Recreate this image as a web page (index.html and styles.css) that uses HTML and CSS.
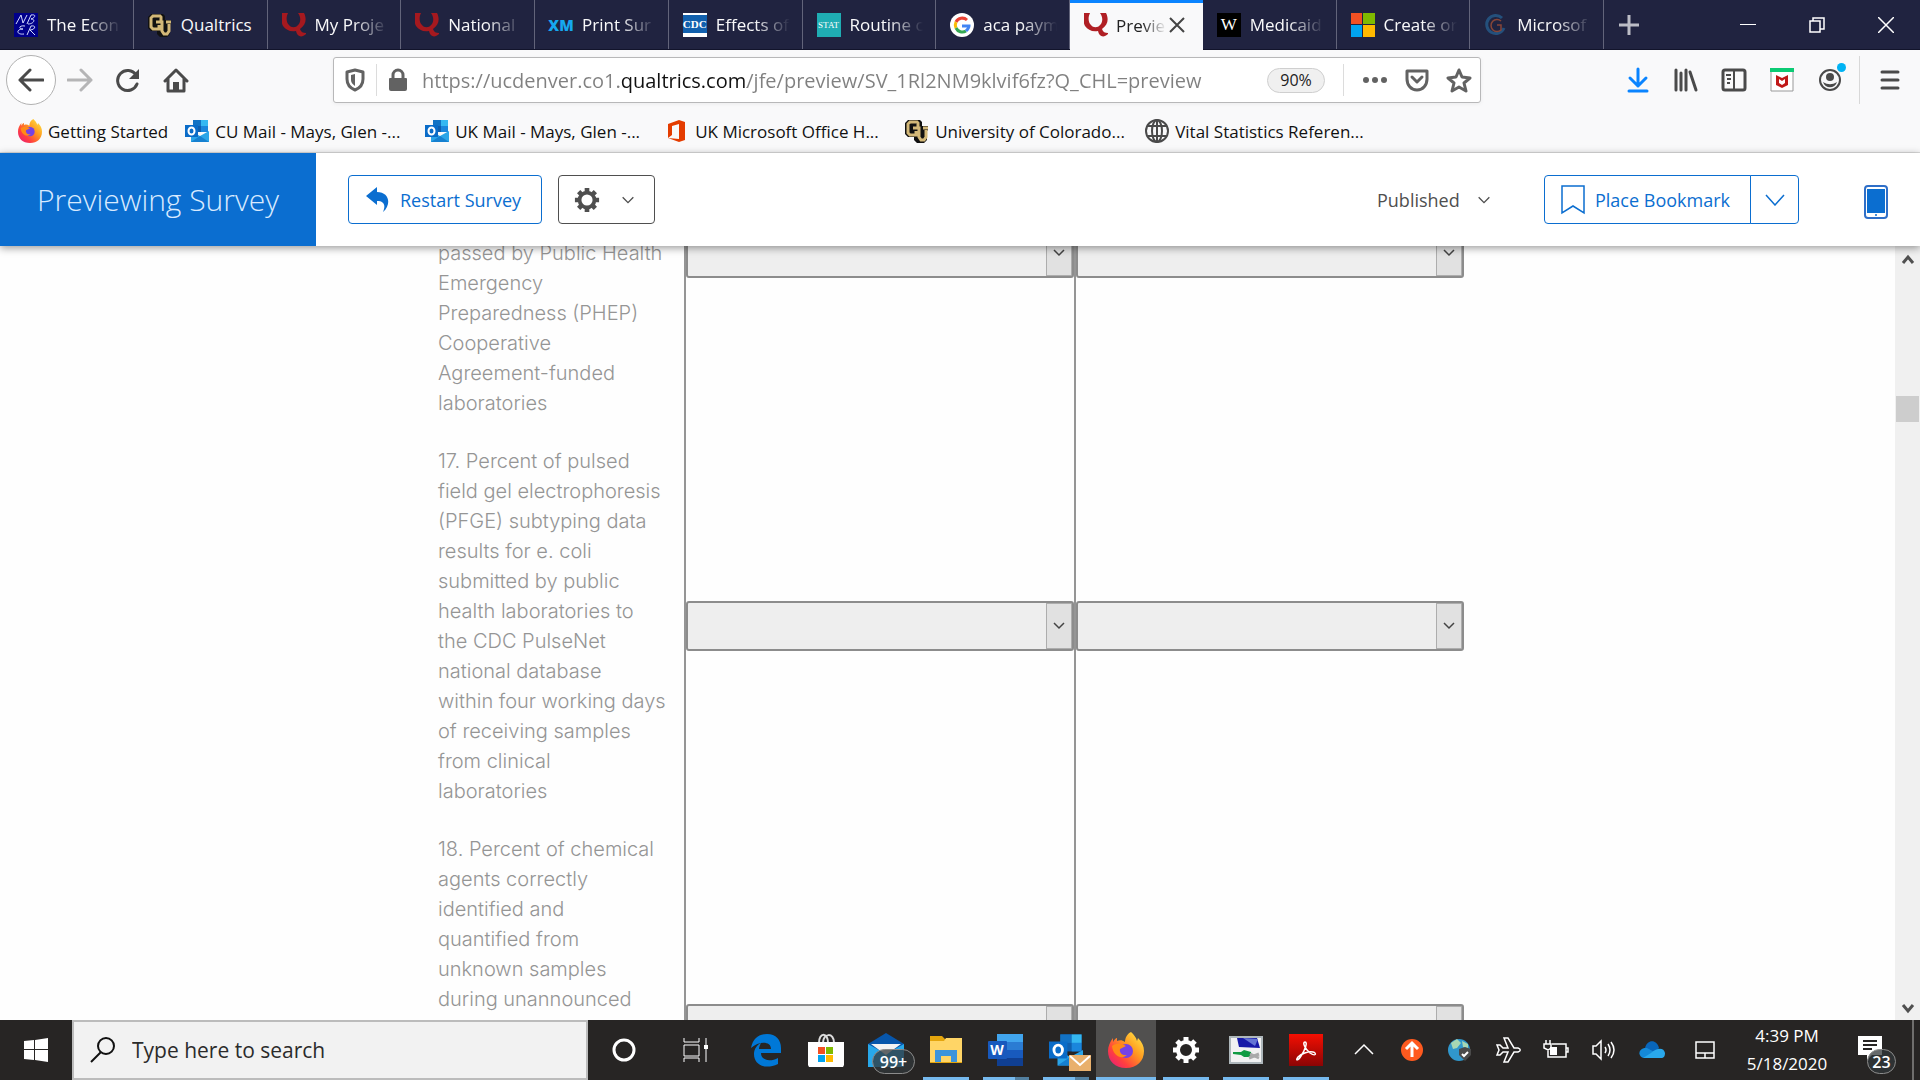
FILE: index.html
```html
<!DOCTYPE html>
<html lang="en">
<head>
    <meta charset="UTF-8">
    <meta name="viewport" content="width=device-width, initial-scale=1.0">
    <title>Preview - Online Survey Software</title>
    <link rel="stylesheet" href="styles.css">
</head>
<body>
    <!-- shared icons -->
    <svg class="defs" aria-hidden="true">
        <symbol id="q-logo" viewBox="0 0 24 24">
            <path d="M0 0h6c-2 4-2 9 1 12 2 3 7 3 9 0 3-3 3-8 0-12h6c3 6 2 12-4 16 1 3 3 4 6 4v1c-4 4-9 3-10-3-6 1-10-1-13-5C-1 9-1 4 0 0z"/>
        </symbol>
        <symbol id="cu-logo" viewBox="0 0 24 24">
            <path d="M3 1h12l2 2v4h6v4l-1 1v9l-3 3h-7l-3-3v-3H3l-3-3V4z" fill="#111"/>
            <path d="M13 8V4l-1-1H5L3 5v9l2 2h6v-4M8 9h6v9l2 3h3l2-3v-7M18 9h5" fill="none" stroke="#d3b878" stroke-width="3"/>
        </symbol>
        <symbol id="outlook" viewBox="0 0 24 24">
            <path d="M8 1h15v12H8z" fill="#0f5fae"/>
            <path d="M8 1h8v6H8z" fill="#1272c4"/>
            <path d="M16 1h7v6h-7z" fill="#35b8f1"/>
            <path d="M16 7h7v6h-7z" fill="#1a86dc"/>
            <path d="M6 12l9 5 9-5v11H6z" fill="#2ba5e8"/>
            <path d="M15 17l9 6H6z" fill="#1680d0"/>
            <path d="M0 6h13v12H0z" fill="#0a6cc8"/>
            <ellipse cx="6.500" cy="12" rx="3" ry="3.500" fill="none" stroke="#fff" stroke-width="2"/>
        </symbol>
        <symbol id="firefox" viewBox="0 0 36 36">
            <linearGradient id="ff" x1="1" y1="0" x2="0" y2="1">
                <stop offset="0" stop-color="#fff44f"/><stop offset=".4" stop-color="#ff9a1f"/>
                <stop offset=".7" stop-color="#ff3f3f"/><stop offset="1" stop-color="#e31587"/>
            </linearGradient>
            <path d="M23 0c3 3 5 5 6 9l1-3c4 4 6 8 6 13 0 10-7 17-18 17S0 29 0 19c0-5 2-9 5-13v4c1-2 3-4 4-4v3c3-1 5-1 8 1 0-4 2-8 6-10z" fill="url(#ff)"/>
            <circle cx="18" cy="19" r="7" fill="#7542e5"/>
            <path d="M4 14c4-3 9-3 14 0l-6 3c-1 4 3 7 7 6-5 5-14 1-15-9z" fill="#ff8a16"/>
        </symbol>
        <symbol id="chevron" viewBox="0 0 24 24">
            <path d="M4 8l8 8 8-8" fill="none" stroke="currentColor" stroke-width="2"/>
        </symbol>
        <symbol id="gear" viewBox="0 0 28 28">
            <circle cx="14" cy="14" r="8" fill="none" stroke="currentColor" stroke-width="4"/>
            <path d="M14 1v5M14 22v5M1 14h5M22 14h5M5 5l4 4M19 19l4 4M5 23l4-4M19 9l4-4" stroke="currentColor" stroke-width="5"/>
        </symbol>
    </svg>

    <nav class="tabs">
        <div class="tab"><button class="tab-main">
            <svg class="fav" viewBox="0 0 24 24"><path d="M0 0h24v24H0z" fill="#00008b"/><g fill="none" stroke="#d5dcff"><path d="M2 11L7 2l2 8 4-8M13 11l4-9c6-1 4 3 0 4 5 0 3 5-3 5"/><path d="M11 13c-6-1-7 3-2 3-7 0-7 6 1 5M13 22l4-9c6-1 4 4-1 4l5 5"/></g></svg>
            <span class="tab-text">The Econ</span></button></div>
        <div class="tab"><button class="tab-main">
            <svg class="fav"><use href="#cu-logo"/></svg>
            <span class="tab-text">Qualtrics</span></button></div>
        <div class="tab"><button class="tab-main">
            <svg class="fav q-dark"><use href="#q-logo"/></svg>
            <span class="tab-text">My Proje</span></button></div>
        <div class="tab"><button class="tab-main">
            <svg class="fav q-dark"><use href="#q-logo"/></svg>
            <span class="tab-text">National</span></button></div>
        <div class="tab"><button class="tab-main">
            <span class="fav fav-xm">XM</span>
            <span class="tab-text">Print Sur</span></button></div>
        <div class="tab"><button class="tab-main">
            <span class="fav fav-cdc">CDC</span>
            <span class="tab-text">Effects of</span></button></div>
        <div class="tab"><button class="tab-main">
            <span class="fav fav-stat">STAT</span>
            <span class="tab-text">Routine c</span></button></div>
        <div class="tab"><button class="tab-main">
            <svg class="fav" viewBox="0 0 24 24"><circle cx="12" cy="12" r="12" fill="#fff"/><g fill="none" stroke-width="3"><path d="M17 7a7 7 0 0 0-11 2" stroke="#ea4335"/><path d="M6 9a7 7 0 0 0 0 6" stroke="#fbbc05"/><path d="M6 15a7 7 0 0 0 10 3" stroke="#34a853"/><path d="M16 18c2-2 3-3 3-5h-7" stroke="#4285f4"/></g></svg>
            <span class="tab-text">aca paym</span></button></div>
        <div class="tab active"><button class="tab-main">
            <svg class="fav q-light"><use href="#q-logo"/></svg>
            <span class="tab-text">Previe</span></button>
            <button class="tab-close" aria-label="Close tab"><svg width="16" height="16" viewBox="0 0 16 16"><path d="M1 1l14 14M15 1L1 15" stroke="#444" stroke-width="2"/></svg></button></div>
        <div class="tab"><button class="tab-main">
            <span class="fav fav-w">W</span>
            <span class="tab-text">Medicaid</span></button></div>
        <div class="tab"><button class="tab-main">
            <svg class="fav" viewBox="0 0 24 24"><path d="M0 0h11v11H0z" fill="#f25022"/><path d="M12 0h12v11H12z" fill="#7fba00"/><path d="M0 12h11v12H0z" fill="#00a4ef"/><path d="M12 12h12v12H12z" fill="#ffb900"/></svg>
            <span class="tab-text">Create or</span></button></div>
        <div class="tab"><button class="tab-main">
            <svg class="fav" viewBox="0 0 24 24"><g fill="none"><path d="M18 5a9 9 0 1 0 2 10" stroke="#24507c" stroke-width="3"/><path d="M17 8a6 6 0 1 0 0 9v-5h-4" stroke="#874638" stroke-width="1.500"/></g></svg>
            <span class="tab-text">Microsof</span></button></div>
        <div class="window-controls">
            <button class="new-tab" aria-label="New tab"><svg width="22" height="22" viewBox="0 0 22 22"><path d="M11 1v20M1 11h20" stroke="#bcbdc6" stroke-width="3"/></svg></button>
            <button class="win-btn" aria-label="Minimize"><svg width="16" height="16" viewBox="0 0 16 16"><path d="M0 7h16v1H0z" fill="#fff"/></svg></button>
            <button class="win-btn" aria-label="Restore"><svg width="16" height="16" viewBox="0 0 16 16"><path d="M1 4h10v11H1zM4 4V1h11v11h-4" fill="none" stroke="#fff" stroke-width="1.500"/></svg></button>
            <button class="win-btn" aria-label="Close"><svg width="16" height="16" viewBox="0 0 16 16"><path d="M0 0l16 16M16 0L0 16" stroke="#fff" stroke-width="1.500"/></svg></button>
        </div>
    </nav>

    <div class="toolbar">
        <button class="back" aria-label="Back"><svg width="26" height="26" viewBox="0 0 26 26"><path d="M25 13H2M12 3L2 13l10 10" class="line"/></svg></button>
        <button class="tool pale" aria-label="Forward"><svg width="26" height="26" viewBox="0 0 26 26"><path d="M1 13h23M14 3l10 10-10 10" class="line"/></svg></button>
        <button class="tool" aria-label="Reload"><svg width="26" height="26" viewBox="0 0 26 26"><path d="M22 17a10 10 0 1 1-1-9" class="line"/><path d="M24 2v10H14z" fill="currentColor"/></svg></button>
        <button class="tool" aria-label="Home"><svg width="26" height="26" viewBox="0 0 26 26"><path d="M2 14L13 3l11 11M5 12v12h16V12" class="line"/><path d="M10 15h6v8h-6z" fill="currentColor"/></svg></button>

        <div class="url-bar">
            <svg class="shield" width="22" height="24" viewBox="0 0 22 24"><path d="M11 2l8 2v7c0 5-3 9-8 11-5-2-8-6-8-11V4z" class="line"/><path d="M11 6l-4 1v5c0 3 2 4 4 6z" fill="currentColor"/></svg>
            <span class="divider"></span>
            <svg width="20" height="24" viewBox="0 0 20 24"><path d="M5 11V7a5 5 0 0 1 10 0v4" class="line"/><path d="M2 10h16a1 1 0 0 1 1 1v10a2 2 0 0 1-2 2H3a2 2 0 0 1-2-2V11a1 1 0 0 1 1-1z" fill="currentColor"/></svg>
            <input class="url" type="text" aria-label="Address" value="https://ucdenver.co1.qualtrics.com/jfe/preview/SV_1Rl2NM9klvif6fz?Q_CHL=preview">
            <button class="zoom">90%</button>
            <span class="divider"></span>
            <button class="url-btn" aria-label="Page actions"><svg width="26" height="24" viewBox="0 0 26 24"><g fill="currentColor"><circle cx="4" cy="12" r="3"/><circle cx="13" cy="12" r="3"/><circle cx="22" cy="12" r="3"/></g></svg></button>
            <button class="url-btn" aria-label="Save to Pocket"><svg width="26" height="24" viewBox="0 0 26 24"><path d="M3 3h20v8c0 6-4 11-10 11S3 17 3 11zM8 9l5 5 5-5" class="line"/></svg></button>
            <button class="url-btn" aria-label="Bookmark"><svg width="26" height="26" viewBox="0 0 26 26"><path d="M13 3l3 7 8 1-6 5 2 8-7-4-7 4 2-8-6-5 8-1z" class="line"/></svg></button>
        </div>

        <div class="right-tools">
            <button class="tool blue" aria-label="Downloads"><svg width="24" height="26" viewBox="0 0 24 26"><path d="M12 2v17M4 11l8 8 8-8M3 24h18" class="line"/></svg></button>
            <button class="tool" aria-label="Library"><svg width="26" height="24" viewBox="0 0 26 24"><path d="M3 2v20M8 5v17M13 2v20M17 4l6 18" class="line"/></svg></button>
            <button class="tool" aria-label="Sidebars"><svg width="26" height="24" viewBox="0 0 26 24"><path d="M4 2h18a2 2 0 0 1 2 2v16a2 2 0 0 1-2 2H4a2 2 0 0 1-2-2V4a2 2 0 0 1 2-2z" class="line"/><path d="M13 3v18M5 7h5M6 11h4M6 15h3" stroke="currentColor" stroke-width="2"/></svg></button>
            <button class="tool" aria-label="McAfee"><svg width="24" height="24" viewBox="0 0 24 24"><path d="M1 1h22v22H1z" fill="#fff" stroke="#999"/><path d="M0 0h24v4H0z" fill="#0ccb74"/><path d="M6 7l6 3 6-3v10l-6 3-6-3z" fill="#c01818"/><path d="M9 11l3 2 3-2v4l-3 2-3-2z" fill="#fff"/></svg></button>
            <button class="tool account" aria-label="Account"><svg width="24" height="24" viewBox="0 0 24 24"><circle cx="12" cy="12" r="10" fill="none" stroke="currentColor" stroke-width="2"/><circle cx="12" cy="9" r="4" fill="currentColor"/><path d="M5 14c5 3 9 3 14 0-2 7-12 7-14 0z" fill="currentColor"/></svg></button>
            <button class="tool menu" aria-label="Menu"><svg width="20" height="20" viewBox="0 0 20 20"><path d="M2 2h16M2 10h16M2 18h16" class="line"/></svg></button>
        </div>
    </div>

    <div class="bookmarks">
        <a class="bookmark" href="#"><svg class="fav"><use href="#firefox"/></svg>Getting Started</a>
        <a class="bookmark wide-mark" href="#"><svg class="fav"><use href="#outlook"/></svg>CU Mail - Mays, Glen -...</a>
        <a class="bookmark wide-mark" href="#"><svg class="fav"><use href="#outlook"/></svg>UK Mail - Mays, Glen -...</a>
        <a class="bookmark wide-mark" href="#"><svg class="fav" viewBox="0 0 24 24"><path d="M3 5l11-4 6 2v18l-6 2L3 19l11 1V5L7 7v9l-4 3z" fill="#e43c00"/></svg>UK Microsoft Office H...</a>
        <a class="bookmark wide-mark" href="#"><svg class="fav"><use href="#cu-logo"/></svg>University of Colorado...</a>
        <a class="bookmark wide-mark" href="#"><svg class="fav" viewBox="0 0 24 24"><g fill="none" stroke="#4a4a4a" stroke-width="2"><circle cx="12" cy="12" r="11"/><ellipse cx="12" cy="12" rx="5" ry="11"/><path d="M12 1v22M3 7h18M3 17h18"/></g></svg>Vital Statistics Referen...</a>
    </div>

    <header class="preview-header">
        <h1 class="preview-title">Previewing Survey</h1>
        <button class="btn restart"><svg width="24" height="26" viewBox="0 0 24 26"><path d="M0 9L11 0v5c12 0 15 12 6 20 3-7 1-11-6-11v4z" fill="currentColor"/></svg>Restart Survey</button>
        <button class="btn settings" aria-label="Settings"><svg width="26" height="26"><use href="#gear"/></svg><svg width="16" height="16"><use href="#chevron"/></svg></button>
        <div class="header-right">
            <label class="version">
                <select class="version-select" aria-label="Version"><option>Published</option></select>
                <svg width="16" height="16"><use href="#chevron"/></svg>
            </label>
            <div class="bookmark-group">
                <button class="btn place"><svg width="24" height="30" viewBox="0 0 24 30"><path d="M1 1h22v27l-11-7-11 7z" fill="none" stroke="currentColor" stroke-width="1.500"/></svg>Place Bookmark</button>
                <button class="btn place-more" aria-label="More bookmarks"><svg width="20" height="12" viewBox="0 0 20 12"><path d="M1 1l9 10 9-10" fill="none" stroke="currentColor" stroke-width="1.500"/></svg></button>
            </div>
            <button class="phone" aria-label="Mobile view"><svg width="24" height="34" viewBox="0 0 24 34"><rect x="1" y="1" width="22" height="32" rx="3" fill="#fff" stroke="#2f6fc8" stroke-width="2"/><path d="M3 4h18v24H3z" fill="#0b6ed0"/><circle cx="12" cy="30" r="1" fill="#0b6ed0"/></svg></button>
        </div>
    </header>

    <main class="page">
        <div class="survey">
            <table class="matrix">
                <tr class="row-16">
                    <th scope="row">passed by Public Health<br>Emergency<br>Preparedness (PHEP)<br>Cooperative<br>Agreement-funded<br>laboratories</th>
                    <td><select class="answer" aria-label="Item 16, first answer"><option></option></select></td>
                    <td><select class="answer" aria-label="Item 16, second answer"><option></option></select></td>
                </tr>
                <tr>
                    <th scope="row">17. Percent of pulsed<br>field gel electrophoresis<br>(PFGE) subtyping data<br>results for e. coli<br>submitted by public<br>health laboratories to<br>the CDC PulseNet<br>national database<br>within four working days<br>of receiving samples<br>from clinical<br>laboratories</th>
                    <td><select class="answer" aria-label="Item 17, first answer"><option></option></select></td>
                    <td><select class="answer" aria-label="Item 17, second answer"><option></option></select></td>
                </tr>
                <tr class="row-18">
                    <th scope="row">18. Percent of chemical<br>agents correctly<br>identified and<br>quantified from<br>unknown samples<br>during unannounced</th>
                    <td><select class="answer" aria-label="Item 18, first answer"><option></option></select></td>
                    <td><select class="answer" aria-label="Item 18, second answer"><option></option></select></td>
                </tr>
            </table>
        </div>
        <div class="scrollbar">
            <svg width="14" height="28" viewBox="0 0 14 28"><path d="M2 17l5-6 5 6" fill="none" stroke="#505050" stroke-width="3"/></svg>
            <div class="thumb"></div>
            <svg width="14" height="28" viewBox="0 0 14 28"><path d="M2 13l5 6 5-6" fill="none" stroke="#505050" stroke-width="3"/></svg>
        </div>
    </main>

    <footer class="taskbar">
        <button class="start" aria-label="Start"><svg width="24" height="24" viewBox="0 0 24 24"><path d="M0 3l10-1v9H0zM11 2l13-2v11H11zM0 12h10v10L0 21zM11 12h13v12l-13-2z" fill="#fff"/></svg></button>
        <label class="search">
            <svg width="26" height="26" viewBox="0 0 26 26"><circle cx="16" cy="9" r="8" fill="none" stroke="#111" stroke-width="2"/><path d="M11 15L1 25" stroke="#111" stroke-width="2"/></svg>
            <input type="search" placeholder="Type here to search" aria-label="Search">
        </label>
        <button class="task wide" aria-label="Cortana"><svg width="24" height="24" viewBox="0 0 24 24"><circle cx="12" cy="12" r="10" fill="none" stroke="#fff" stroke-width="3"/></svg></button>
        <button class="task wide" aria-label="Task view"><svg width="26" height="24" viewBox="0 0 26 24"><path d="M1 0v4h15V0M1 7h15v11H1zM1 24v-4h15v4M23 0v24" fill="none" stroke="#fff"/><path d="M21 7h4v4h-4z" fill="#fff"/></svg></button>
        <div class="apps">
            <button class="task" aria-label="Edge"><svg width="32" height="34" viewBox="0 0 32 34"><path d="M1 15C3 5 9 1 17 1c9 0 14 6 14 14v5H11c0 8 10 9 17 5v6C15 37 4 32 4 21c0-5 3-9 7-11-1 2-2 4-2 6h12c0-8-12-8-20-1z" fill="#0078d7"/></svg></button>
            <button class="task" aria-label="Store"><svg width="36" height="36" viewBox="0 0 36 36"><path d="M11 11C11 0 20 0 20 11M15 11c0-10 11-11 11 0" fill="none" stroke="#ddd" stroke-width="2"/><path d="M0 10h36v23l-1 2H1l-1-2z" fill="#fff"/><path d="M10 15h7v7h-7z" fill="#f25022"/><path d="M18 15h7v7h-7z" fill="#7fba00"/><path d="M10 23h7v7h-7z" fill="#00a4ef"/><path d="M18 23h7v7h-7z" fill="#ffb900"/></svg></button>
            <button class="task" aria-label="Mail"><svg width="36" height="36" viewBox="0 0 36 36"><path d="M0 12L18 1l18 11v23H0z" fill="#0756ab"/><path d="M0 12l18 10 18-10v23H0z" fill="#28a8ea"/><path d="M3 12h30L18 23z" fill="#f3f3f3"/></svg><span class="badge mail-badge">99+</span></button>
            <button class="task open" aria-label="File Explorer"><svg width="32" height="30" viewBox="0 0 32 30"><path d="M0 1h12l3 3h17v24H0z" fill="#e4a50d"/><path d="M0 6h14l2-3h16v24H0z" fill="#ffd566"/><path d="M5 15h22v12h-6v-6H11v6H5z" fill="#3c94db"/></svg></button>
            <button class="task open stacked" aria-label="Word"><svg width="36" height="34" viewBox="0 0 36 34"><path d="M9 1h26v9H9z" fill="#41a5ee"/><path d="M9 9h26v8H9z" fill="#2b7cd3"/><path d="M9 17h26v8H9z" fill="#185abd"/><path d="M9 25h26v8H9z" fill="#103f91"/><rect y="8" width="19" height="18" rx="1" fill="#1859bd"/><text x="9" y="22" text-anchor="middle" class="word-letter">W</text></svg></button>
            <button class="task open stacked" aria-label="Outlook"><svg width="36" height="34"><use href="#outlook"/></svg><svg class="envelope" width="22" height="16" viewBox="0 0 22 16"><path d="M0 0h22v16H0z" fill="#e9b06c"/><path d="M1 1l10 9 10-9" fill="none" stroke="#fff" stroke-width="2"/></svg></button>
            <button class="task open current" aria-label="Firefox"><svg width="36" height="36"><use href="#firefox"/></svg></button>
            <button class="task open" aria-label="Settings"><svg width="28" height="28"><use href="#gear"/></svg></button>
            <button class="task open" aria-label="Remote desktop"><svg width="34" height="28" viewBox="0 0 34 28"><path d="M1 1h32v26H1z" fill="#f2f2f2" stroke="#aeb7bb" stroke-width="2"/><path d="M8 2h20l3 10-21-1z" fill="#1719a8"/><path d="M14 2l15 1-3 7z" fill="#6474d4"/><path d="M4 16h8l3-2 7 2 1 5h-8l-3-2-8-1z" fill="#109b42"/><path d="M21 18l9 4M20 22l10-4" stroke="#aaa" stroke-width="3"/></svg></button>
            <button class="task open" aria-label="Acrobat"><svg width="34" height="32" viewBox="0 0 34 32"><linearGradient id="pdf" x2="0" y2="1"><stop stop-color="#f40f02"/><stop offset="1" stop-color="#8b0505"/></linearGradient><path d="M0 0h34v32H0z" fill="url(#pdf)"/><path d="M16 8c-3 0 0 7 5 11 6 4 7 0 3-1-5-1-12 2-15 5-3 4 0 4 3-1 4-6 7-14 4-14z" fill="none" stroke="#fff" stroke-width="1.500"/></svg></button>
        </div>
        <div class="tray">
            <button class="tray-btn" aria-label="Show hidden icons"><svg width="20" height="20" viewBox="0 0 20 20"><path d="M1 14l9-9 9 9" fill="none" stroke="#fff" stroke-width="1.500"/></svg></button>
            <button class="tray-btn" aria-label="Updates"><svg width="22" height="22" viewBox="0 0 22 22"><circle cx="11" cy="11" r="11" fill="#ff5a1f"/><path d="M11 18V5M5 10l6-6 6 6" fill="none" stroke="#fff" stroke-width="3"/></svg></button>
            <button class="tray-btn" aria-label="Network security"><svg width="24" height="24" viewBox="0 0 24 24"><circle cx="11" cy="12" r="11" fill="#3097cc"/><path d="M3 5l6-4 4 4-4 5-4 1zM14 3l6 3v5l-5-2z" fill="#a7d7b3"/><path d="M11 11l6-2 6 2v6l-6 6-6-6z" fill="#4a4a4a"/><path d="M14 16l2 2 4-4" fill="none" stroke="#fff" stroke-width="2"/></svg></button>
            <button class="tray-btn" aria-label="Airplane mode"><svg width="26" height="26" viewBox="0 0 26 26"><path d="M2 8h3l3 3h5L9 1h4l6 10h4c3 1 3 3 0 4h-4l-6 10H9l4-10H8l-3 3H2l2-5z" fill="none" stroke="#fff" stroke-width="1.500"/></svg></button>
            <button class="tray-btn" aria-label="Battery"><svg width="26" height="22" viewBox="0 0 26 22"><path d="M9 5h14v13H5v-7M23 9h2v4h-2M1 5h7v4L5 11 1 9zM3 5V1M7 5V1" fill="none" stroke="#fff" stroke-width="1.500"/><path d="M7 8h7v8H7z" fill="#fff"/></svg></button>
            <button class="tray-btn" aria-label="Volume"><svg width="24" height="22" viewBox="0 0 24 22"><path d="M1 7h3l5-5v18l-5-5H1zM13 8q2 3 0 6M16 5q4 6 0 12M19 3q6 8 0 16" fill="none" stroke="#fff" stroke-width="1.500"/></svg></button>
            <button class="tray-btn" aria-label="OneDrive"><svg width="26" height="20" viewBox="0 0 26 20"><path d="M6 8c2-9 12-9 14 0l-5 6H5z" fill="#0866bb"/><path d="M5 18c-7-1-6-11 3-10l9 5v5z" fill="#1489d8"/><path d="M4 18l8-5c7-6 13-5 14 0 0 3-1 5-4 5z" fill="#29a8ec"/></svg></button>
            <button class="tray-btn touchpad" aria-label="Touchpad"><svg width="20" height="18" viewBox="0 0 20 18"><path d="M1 1h18v16H1zM1 12h18M10 12v5" fill="none" stroke="#fff" stroke-width="1.500"/></svg></button>
            <div class="clock"><span>4:39 PM</span><span>5/18/2020</span></div>
            <button class="notify" aria-label="Notifications"><svg width="24" height="24" viewBox="0 0 24 24"><path d="M0 0h24v19H14l-5 5v-5H0z" fill="#fff"/><path d="M5 5h14M5 9h14M5 13h9" stroke="#272524" stroke-width="2"/></svg><span class="badge notify-badge">23</span></button>
            <button class="show-desktop" aria-label="Show desktop"></button>
        </div>
    </footer>
</body>
</html>
```
FILE: styles.css
```css
* { box-sizing: border-box; }
body { margin: 0; height: 100vh; display: flex; flex-direction: column; overflow: hidden; background: #fefefe; color: #111; font-family: "Open Sans", "Noto Sans", sans-serif; font-size: 17px; }
button, input, select { font: inherit; color: inherit; background: none; border: 0; padding: 0; margin: 0; }
button { display: flex; align-items: center; justify-content: center; }
svg { flex: none; }
.defs { position: absolute; width: 0; height: 0; }
.line { fill: none; stroke: currentColor; stroke-width: 3; stroke-linecap: round; stroke-linejoin: round; }
.fav { width: 24px; height: 24px; flex: none; display: flex; align-items: center; justify-content: center; }

/* tabs */
.tabs { display: flex; height: 50px; flex: none; background: #202340; border-bottom: 1px solid #12142b; }
.tab { display: flex; align-items: center; flex: 1; min-width: 0; border-right: 1px solid #62647a; color: #f9f9fa; }
.tab-main { flex: 1; min-width: 0; height: 100%; justify-content: flex-start; gap: 9px; padding: 0 8px 0 14px; }
.tab-text { flex: 1; text-align: left; white-space: nowrap; overflow: hidden; -webkit-mask-image: linear-gradient(90deg, #000 50%, transparent 95%); mask-image: linear-gradient(90deg, #000 50%, transparent 95%); }
.tab:nth-child(2) .tab-text { -webkit-mask-image: none; mask-image: none; }
.tab.active { height: 50px; background: #f9f9fa; color: #222; border-top: 3px solid #0a84ff; border-right: 0; }
.tab.active .tab-main { gap: 8px; padding: 0 0 3px 14px; }
.tab-close { width: 16px; height: 16px; margin: 0 18px 3px 0; }
.q-dark { fill: #a5191f; }
.q-light { fill: #b01f24; }
.fav-xm { font-weight: 800; font-size: 15px; color: #16a8f0; }
.fav-cdc { background: #1160ad; color: #fff; font-family: "Liberation Serif", serif; font-weight: bold; font-size: 11px; border-bottom: 4px solid #fff; border-top: 2px solid #fff; }
.fav-stat { background: #1fadb3; color: #fff; font-family: "Liberation Serif", serif; font-size: 9px; }
.fav-w { background: #000; color: #fff; font-family: "Liberation Serif", serif; }
.window-controls { display: flex; width: 316px; flex: none; }
.new-tab { width: 50px; margin-right: 60px; }
.win-btn { flex: 1; }

/* toolbar */
.toolbar { display: flex; align-items: center; height: 60px; flex: none; padding-left: 6px; background: #f9f9fa; color: #4a4a4a; }
.back { width: 50px; height: 50px; border: 1px solid #b1b1b1; border-radius: 50%; background: #fff; }
.tool { width: 48px; height: 48px; }
.pale { color: #b5b5b6; }
.blue { color: #0a84ff; }
.url-bar { display: flex; align-items: center; flex: 1; height: 46px; margin-left: 133px; padding-left: 10px; border: 1px solid #b8b8b9; border-radius: 3px; background: #fff; color: #626262; box-shadow: 0 1px 4px rgba(0, 0, 0, .06); }
.divider { width: 1px; height: 32px; background: #dcdcdc; }
.shield { margin-right: 10px; }
.divider + svg { margin-left: 11px; }
.url { flex: 1; min-width: 0; margin-left: 14px; font-size: 20px; outline: 0; color: transparent; background: linear-gradient(90deg, #808080 197px, #111 197px, #111 325px, #808080 325px); -webkit-background-clip: text; background-clip: text; }
.zoom { width: 58px; height: 25px; margin-right: 18px; border: 1px solid #cfcfcf; border-radius: 13px; background: #f0f0f0; color: #222; font-size: 16px; }
.url-btn { width: 42px; height: 40px; }
.divider + .url-btn { margin-left: 10px; }
.right-tools { display: flex; margin-left: 133px; }
.account { position: relative; }
.account::after { content: ""; position: absolute; top: 7px; right: 8px; width: 9px; height: 9px; border-radius: 50%; background: #00b3f4; }
.menu { width: 61px; margin-left: 5px; border-left: 1px solid #d8d8d8; }

/* bookmarks */
.bookmarks { display: flex; align-items: center; gap: 17px; height: 43px; flex: none; padding: 0 18px; background: #f9f9fa; border-bottom: 1px solid #dedede; }
.bookmark { display: flex; align-items: center; gap: 6px; color: #111; text-decoration: none; white-space: nowrap; }
.wide-mark { width: 223px; }

/* survey preview header */
.preview-header { position: relative; z-index: 1; display: flex; align-items: center; height: 93px; flex: none; background: #fff; box-shadow: 0 2px 8px rgba(0, 0, 0, .4); color: #4f4f4f; font-size: 18px; }
.preview-title { display: flex; align-items: center; justify-content: center; width: 316px; height: 100%; margin: 0 32px 0 0; background: #0b6ed0; color: #d8eaff; font-size: 30px; font-weight: 300; }
.btn { height: 49px; border: 1px solid #0b6ed0; border-radius: 4px; color: #0b6ed0; background: #fff; white-space: nowrap; }
.restart { width: 194px; gap: 10px; padding-right: 3px; margin-right: 16px; }
.settings { width: 97px; gap: 20px; padding-right: 4px; border-color: #4f4f4f; color: #4f4f4f; }
.header-right { display: flex; align-items: center; margin-left: auto; padding-right: 32px; }
.version { display: flex; align-items: center; gap: 16px; margin-right: 52px; }
.version-select { appearance: none; }
.bookmark-group { display: flex; margin-right: 65px; }
.place { width: 207px; gap: 10px; padding-right: 4px; border-radius: 4px 0 0 4px; }
.place-more { width: 49px; margin-left: -1px; border-radius: 0 4px 4px 0; }
.phone { padding-top: 5px; }

/* survey matrix, scrolled part way down */
.page { display: flex; flex: 1; min-height: 0; }
.survey { flex: 1; overflow: hidden; }
.matrix { width: 100%; max-width: 1033px; margin: -172px auto 0; border-collapse: separate; border-spacing: 0; table-layout: fixed; }
.matrix th { width: 253px; padding: 14px 0 14px 7px; text-align: left; vertical-align: top; font-family: Inter, sans-serif; font-size: 20px; font-weight: 300; line-height: 30px; color: #959595; white-space: nowrap; }
.matrix td { padding: 0; border-left: 2px solid #959595; vertical-align: middle; }
.row-16 { height: 358px; }
.matrix .row-16 th { vertical-align: bottom; }
.row-18 { height: 418px; }
.answer { display: block; width: 100%; height: 50px; appearance: none; border: 2px solid #8c8c8c; border-radius: 3px; background: #eee url("data:image/svg+xml,%3Csvg xmlns='http://www.w3.org/2000/svg' width='26' height='46'%3E%3Crect x='.5' y='.5' width='25' height='45' fill='%23e1e1e1' stroke='%23adadad'/%3E%3Cpath d='M8 20l5 5 5-5' fill='none' stroke='%23444' stroke-width='1.500'/%3E%3C/svg%3E") right center no-repeat; }
.scrollbar { display: flex; flex-direction: column; align-items: center; width: 25px; background: #f0f0f0; }
.thumb { width: 23px; height: 26px; margin: 122px 0 auto; background: #cdcdcd; }

/* taskbar */
.taskbar { display: flex; height: 60px; flex: none; background: #272524; color: #fff; }
.start { width: 72px; }
.search { display: flex; align-items: center; gap: 16px; width: 516px; padding-left: 16px; border: 2px solid #bcbcbc; background: #f2f2f2; }
.search input { flex: 1; min-width: 0; font-size: 21px; outline: 0; }
.search input::placeholder { color: #2b2b2b; opacity: 1; }
.task { position: relative; width: 60px; height: 60px; }
.wide { width: 72px; }
.apps { display: flex; margin-left: 4px; }
.open::after { content: ""; position: absolute; left: 7px; right: 7px; bottom: 0; height: 3px; background: #76b9ed; }
.stacked::after { background: linear-gradient(90deg, #76b9ed 70%, #527f9f 70%); }
.current { background: #51504f; }
.current::after { left: 0; right: 0; }
.badge { position: absolute; display: flex; align-items: center; justify-content: center; border: 1px solid #8b8b8b; border-radius: 13px; background: rgba(50, 55, 58, .75); height: 25px; font-size: 16px; font-weight: 600; }
.mail-badge { left: 16px; top: 29px; width: 43px; }
.mail-badge, .envelope { z-index: 1; }
.envelope { position: absolute; right: 5px; bottom: 9px; }
.word-letter { fill: #fff; font-size: 14px; font-weight: 700; }
.tray { display: flex; margin-left: auto; }
.tray-btn { width: 48px; }
.touchpad { width: 58px; }
.clock { display: flex; flex-direction: column; align-items: center; justify-content: center; width: 106px; font-size: 17px; line-height: 28px; }
.notify { position: relative; width: 72px; padding: 0 12px 4px 0; }
.notify-badge { right: 16px; top: 29px; width: 29px; }
.show-desktop { width: 8px; border-left: 2px solid #6f6e6d; }
```
